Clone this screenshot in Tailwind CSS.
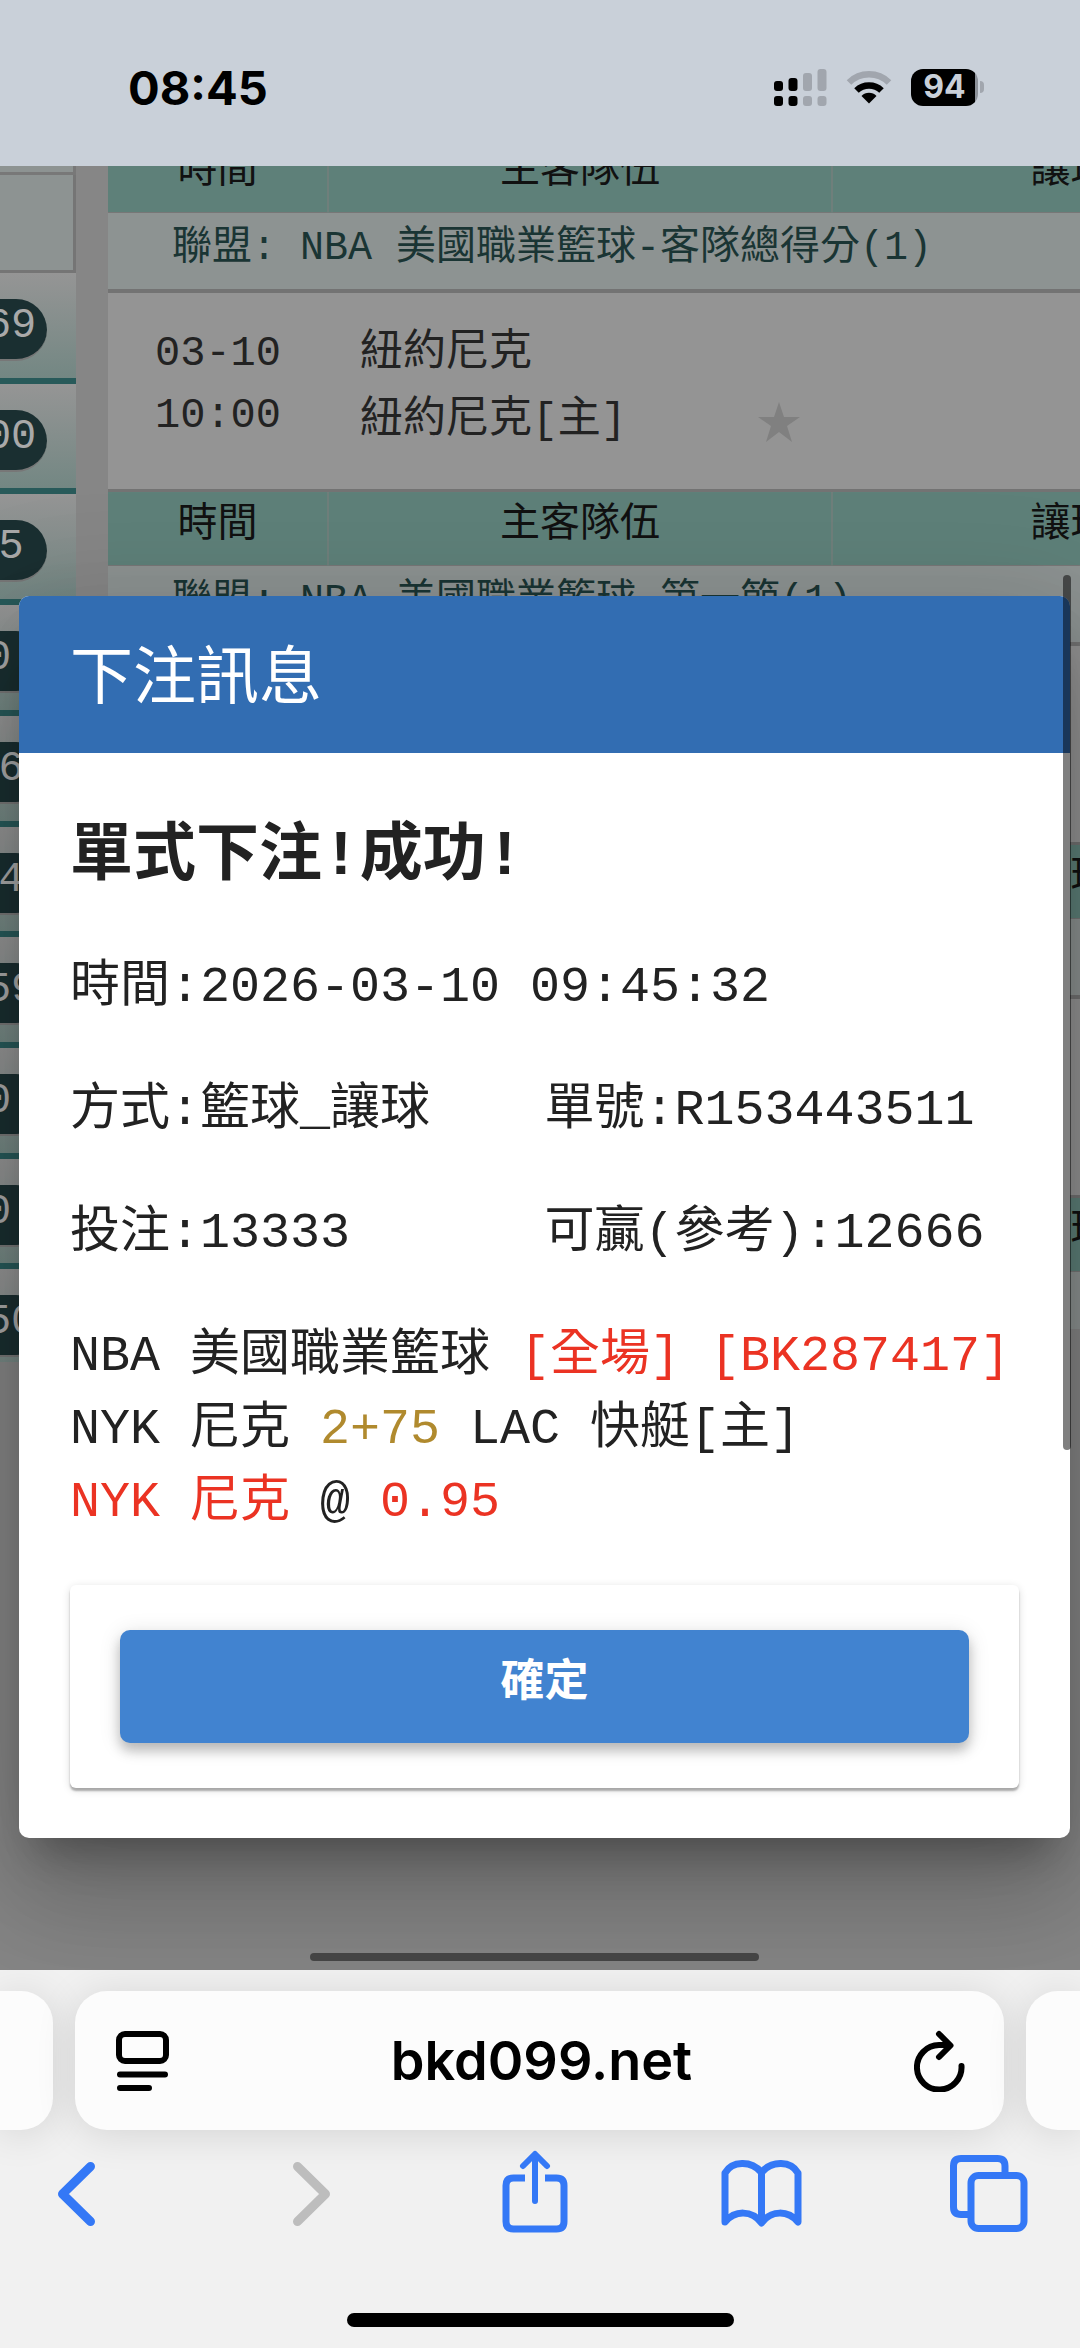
<!DOCTYPE html>
<html lang="zh-Hant">
<head>
    <meta charset="UTF-8">
    <meta name="viewport" content="width=device-width, initial-scale=1.0">
    <title>下注訊息</title>
    <script src="https://cdn.jsdelivr.net/npm/@tailwindcss/browser@4"></script>
</head>
<body class="flex h-screen flex-col overflow-hidden bg-[#f1f1f1] font-['Liberation_Mono','Noto_Sans_CJK_TC',monospace]">

    <!-- Status bar -->
    <header class="flex h-[166px] shrink-0 items-center justify-between bg-[#c9d0d9] pt-2 pr-24 pl-32 font-['Inter',sans-serif]">
        <time class="text-[47px] leading-none font-bold text-black">08:45</time>
        <div class="flex items-center gap-[19px]">
            <svg class="h-[37px] w-[53px]" viewBox="0 0 53 37" aria-label="訊號">
                <g fill="#000">
                    <rect x="0" y="12" width="9" height="10" rx="3"/>
                    <rect x="14.500" y="9" width="9" height="13" rx="3"/>
                    <rect x="0" y="27" width="9" height="10" rx="3"/>
                    <rect x="14.500" y="27" width="9" height="10" rx="3"/>
                </g>
                <g fill="#a1a6ae">
                    <rect x="29" y="4" width="9" height="18" rx="3"/>
                    <rect x="43.500" y="0" width="9" height="22" rx="3"/>
                    <rect x="29" y="27" width="9" height="10" rx="3"/>
                    <rect x="43.500" y="27" width="9" height="10" rx="3"/>
                </g>
            </svg>
            <svg class="h-[34px] w-[46px]" viewBox="0 0 46 34" fill="none" aria-label="Wi-Fi">
                <path d="M3 12.500a28.500 28.500 0 0 1 40 0" stroke="#a1a6ae" stroke-width="6.500"/>
                <path d="M10.500 20.500a18 18 0 0 1 25 0" stroke="#000" stroke-width="6.500"/>
                <path d="M15.500 26a10.500 10.500 0 0 1 15 0L23 33.500z" fill="#000"/>
            </svg>
            <div class="flex items-center gap-[2px]">
                <span class="flex h-[37px] w-[67px] items-center justify-center rounded-xl bg-linear-to-r from-black from-96% to-[#8d929a] to-96% text-[32px] leading-none font-bold text-[#c9d0d9]">94</span>
                <span class="h-3 w-1 rounded-r-full bg-[#a1a6ae]"></span>
            </div>
        </div>
    </header>

    <!-- Web page -->
    <main class="relative min-h-0 flex-1 overflow-hidden bg-[#868686]">
        <div class="flex items-start gap-8">
            <aside class="h-[1196px] w-[76px] shrink-0 overflow-hidden">
                <div class="h-[9px] border-r-3 border-b-3 border-[#787878] bg-[#8d9392]"></div>
                <div class="h-[98px] border-r-3 border-b-3 border-[#757575] bg-[#8d9392]"></div>
                <ul id="counts" class="flex h-[1107px] flex-col"></ul>
            </aside>

            <table class="-mt-[29px] w-[1200px] shrink-0 table-fixed border-collapse text-[40px] leading-[50px]">
                <colgroup>
                    <col class="w-[220px]">
                    <col class="w-[504px]">
                    <col class="w-[476px]">
                </colgroup>
                <tbody id="odds"></tbody>
            </table>
        </div>

        <!-- Bet message dialog -->
        <section role="dialog" aria-labelledby="dialogTitle" class="absolute top-[430px] right-[10px] left-[19px] rounded-[10px] bg-white text-[50px] leading-[73px] text-[#222] shadow-[0_29px_40px_-18px_rgba(0,0,0,0.3),0_64px_100px_8px_rgba(0,0,0,0.14),0_24px_120px_21px_rgba(0,0,0,0.12)]">
            <h1 id="dialogTitle" class="rounded-t-[10px] bg-[#326db2] px-[51px] pt-[46px] pb-[31px] text-[63px] leading-[80px] text-white">下注訊息</h1>
            <div class="px-[51px] pt-[59px] pb-[50px]">
                <h2 class="mb-[47px] text-[63px] leading-[92px] font-bold">單式下注!成功!</h2>
                <div class="mb-[50px] grid grid-cols-2 gap-y-[50px] whitespace-nowrap">
                    <p class="col-span-2">時間:2026-03-10 09:45:32</p>
                    <p>方式:籃球_讓球</p>
                    <p>單號:R153443511</p>
                    <p>投注:13333</p>
                    <p>可贏(參考):12666</p>
                </div>
                <p class="whitespace-nowrap">NBA 美國職業籃球 <span class="text-[#eb3323]">[全場] [BK287417]</span></p>
                <p class="whitespace-nowrap">NYK 尼克 <span class="text-[#b08a2e]">2+75</span> LAC 快艇[主]</p>
                <p class="whitespace-nowrap"><span class="text-[#eb3323]">NYK 尼克</span> @ <span class="text-[#eb3323]">0.95</span></p>
                <div class="mt-[46px] rounded-md px-[50px] py-[45px] shadow-[0_3px_2px_rgba(0,0,0,0.28),0_2px_8px_rgba(0,0,0,0.14)]">
                    <button type="button" class="block h-[113px] w-full rounded-[10px] bg-[#4183d0] pb-[6px] text-[44px] leading-[60px] font-bold text-white shadow-[0_8px_12px_rgba(0,0,0,0.22),0_3px_22px_rgba(0,0,0,0.12)]">確定</button>
                </div>
            </div>
        </section>

        <!-- Scroll indicators -->
        <div class="absolute top-[409px] right-[9px] h-[875px] w-2 rounded-full bg-black/50"></div>
        <div class="absolute bottom-[9px] left-[310px] h-2 w-[449px] rounded-full bg-[#444]"></div>
    </main>

    <!-- Browser bar -->
    <footer class="shrink-0 pt-[21px] font-['Inter',sans-serif]">
        <div class="flex h-[139px] gap-[22px]">
            <div class="w-[53px] rounded-r-[32px] bg-[#fcfcfc] shadow-[0_4px_40px_rgba(0,0,0,0.12)]"></div>
            <div class="flex flex-1 items-center justify-between rounded-[32px] bg-[#fcfcfc] pr-[38px] pl-[41px] shadow-[0_4px_40px_rgba(0,0,0,0.12)]">
                <button type="button" aria-label="頁面選單">
                    <svg class="h-[60px] w-[53px]" viewBox="0 0 53 60" fill="none" stroke="#000" stroke-width="6" stroke-linecap="round">
                        <rect x="3" y="3" width="47" height="27" rx="6"/>
                        <path d="M4 43.500h45M4 57h29"/>
                    </svg>
                </button>
                <a href="#" class="text-[54px] leading-none font-semibold text-black">bkd099.net</a>
                <button type="button" aria-label="重新載入">
                    <svg class="h-[62px] w-[52px]" viewBox="0 0 52 62" fill="none" stroke="#000" stroke-width="6" stroke-linecap="round" stroke-linejoin="round">
                        <path d="M47.500 36A22.300 22.300 0 1 1 25 15h9"/>
                        <path d="M25 4l11.500 11.500L25 27"/>
                    </svg>
                </button>
            </div>
            <div class="w-[54px] rounded-l-[32px] bg-[#fcfcfc] shadow-[0_4px_40px_rgba(0,0,0,0.12)]"></div>
        </div>
        <nav class="mt-5 flex justify-between pr-[50px] pl-[35px]">
            <button type="button" aria-label="返回">
                <svg class="h-[84px] w-[82px]" viewBox="0 0 82 84" fill="none" stroke="#3478f6" stroke-width="9" stroke-linecap="round" stroke-linejoin="round">
                    <path d="M55.500 16.500L27.500 44l28 27.500"/>
                </svg>
            </button>
            <button type="button" aria-label="前進" disabled>
                <svg class="h-[84px] w-[82px]" viewBox="0 0 82 84" fill="none" stroke="#bdbdbd" stroke-width="9" stroke-linecap="round" stroke-linejoin="round">
                    <path d="M34.500 16.500L62.500 44l-28 27.500"/>
                </svg>
            </button>
            <button type="button" aria-label="分享">
                <svg class="h-[84px] w-[82px]" viewBox="1 0 82 84" fill="none" stroke="#3478f6" stroke-width="7">
                    <path d="M34 28H22.500q-7.500 0-7.500 7.500v36q0 7.500 7.500 7.500h43q7.500 0 7.500-7.500v-36q0-7.500-7.500-7.500H54"/>
                    <path d="M44 51V5M32 16L44 4l12 12" stroke-width="6" stroke-linecap="round" stroke-linejoin="round"/>
                </svg>
            </button>
            <button type="button" aria-label="書籤">
                <svg class="h-[84px] w-[82px]" viewBox="0 0 82 84" fill="none" stroke="#3478f6" stroke-width="7" stroke-linecap="round" stroke-linejoin="round">
                    <path d="M41.500 22.500C31 10 12 11 5 23v49C15 60 32 60 41.500 73 51 60 68 60 78 72V23C71 11 52 10 41.500 22.500zV71"/>
                </svg>
            </button>
            <button type="button" aria-label="分頁">
                <svg class="h-[84px] w-[82px]" viewBox="0 0 82 84" fill="none" stroke="#3478f6" stroke-width="7">
                    <path d="M57 24v-8q0-7.500-7.500-7.500H13Q5.500 8.500 5.500 16v41q0 7.500 7.500 7.500h9"/>
                    <rect x="23" y="25.500" width="53" height="53" rx="7.500"/>
                </svg>
            </button>
        </nav>
        <div class="flex justify-center pt-[79px] pb-[21px]">
            <div class="h-[14px] w-[387px] rounded-full bg-black"></div>
        </div>
    </footer>

    <script>
        // Open bet counts for the left menu
        const counts = [169, 100, 15, 0, 16, 14, 159, 0, 0, 150];
        document.getElementById('counts').innerHTML = counts.map(n => `
            <li class="flex-1 border-b-6 border-[#285a5a] bg-linear-to-b from-[#959595] to-[#738783] pt-[26px]">
                <span class="-ml-[50px] block h-[62px] w-[97px] rounded-full border-b-2 border-[#777] bg-[#1a2f31] pt-[2px] text-center text-[42px] leading-[50px] text-[#a9a9a9]">${n}</span>
            </li>`).join('');

        // Leagues and matches
        const leagues = [
            { name: 'NBA 美國職業籃球-客隊總得分(1)', date: '03-10', time: '10:00', away: '紐約尼克', home: '紐約尼克[主]' },
            { name: 'NBA 美國職業籃球-第一節(1)' },
            { name: '' },
            { name: '', last: true }
        ];
        document.getElementById('odds').innerHTML = leagues.map(l => `
            <tr class="h-[75px] border-b border-[#777] bg-[#5e8079] text-[#111]">
                <th class="border-r-2 border-[#6f7f7b] p-0 pb-1 font-normal">時間</th>
                <th class="border-r-2 border-[#6f7f7b] p-0 pb-1 font-normal">主客隊伍</th>
                <th class="p-0 pb-1 font-normal">讓球</th>
            </tr>
            <tr class="${l.last ? 'h-[58px]' : 'h-[79px] border-b-4 border-[#737373]'} bg-[#8d9392] text-[#1a3534]">
                <td colspan="3" class="p-0 pb-1 pl-16">${l.name ? '聯盟: ' + l.name : ''}</td>
            </tr>
            ${l.last ? '' : `<tr class="h-[199px] border-b-3 border-[#737373] bg-[#949494] text-[42px] text-[#222]">
                <td class="p-0 pb-3 text-center leading-[62px]">${l.date ? l.date + '<br>' + l.time : ''}</td>
                <td class="p-0 pb-2 pl-8 text-[43px] leading-[67px]">${l.away ? `
                    <div class="flex items-end justify-between pr-8">
                        <div>${l.away}<br>${l.home}</div>
                        <svg class="mb-3 h-10 w-[42px]" viewBox="0 0 42 40" fill="#808080"><path d="M21 0l5 15h16L29 24l5 16-13-10L8 40l5-16L0 15h16z"/></svg>
                    </div>` : ''}
                </td>
                <td></td>
            </tr>`}`).join('');
    </script>
</body>
</html>
